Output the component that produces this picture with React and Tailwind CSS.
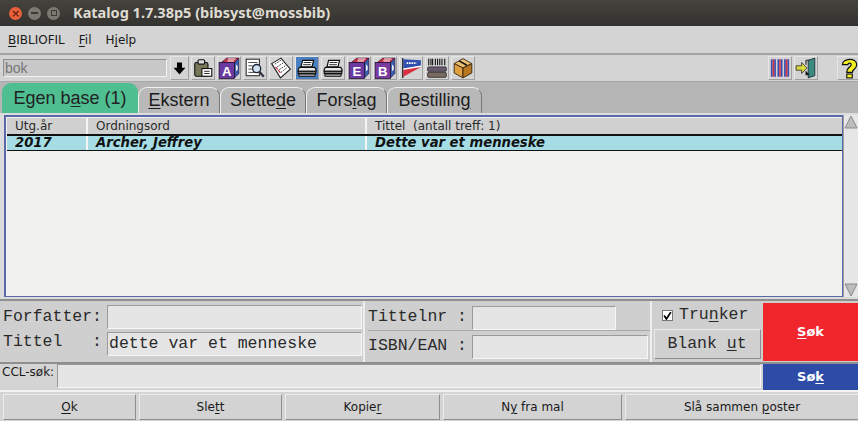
import React from "react";

const ToolBtn = ({ children, active, cls = "", w = "w-[24px]", size = 22 }) => (
  <div className={`${w} h-[24px] flex items-center justify-center shrink-0 border border-t-[#e6e6e6] border-l-[#e6e6e6] border-r-[#a0a0a0] border-b-[#a0a0a0] ${active ? "bg-[#4a7fc0]" : "bg-[#d4d4d4]"} ${cls}`}>
    <svg width={size} height={size} viewBox="0 0 20 20" className="shrink-0">{children}</svg>
  </div>
);

const Cube = ({ letter, c }) => (
  <>
    <path d="M3 5 L8 1 H19 L15 5 Z" fill="#c8324a" stroke="#301030" strokeWidth=".6" />
    <path d="M15 5 L19 1 V15 L15 19 Z" fill="#3a5fb0" stroke="#301030" strokeWidth=".6" />
    <path d="M16.3 6.5 l1.6 2 v3 l-1.6 1.5z" fill="#f0f0f0" />
    <rect x="1" y="5" width="14" height="14.5" fill={c} stroke="#201030" strokeWidth=".7" />
    <text x="8" y="17.5" textAnchor="middle" fontSize="12" fontWeight="700" fill="#fff" fontFamily="Liberation Sans">{letter}</text>
    <path d="M9 1.8h7M8.5 3.6h6" stroke="#fff" strokeWidth="1" />
  </>
);

const Printer = () => (
  <>
    <path d="M6 3 H16 L14.5 9 H4.5 Z" fill="#fff" stroke="#111" strokeWidth="1.1" />
    <path d="M7 5h7M6.5 7h7" stroke="#111" strokeWidth=".8" />
    <path d="M3 9.5 H17 Q19 12 18 13 H2 Q1.5 11 3 9.5Z" fill="#e8e8e8" stroke="#111" strokeWidth="1.1" />
    <rect x="2" y="13" width="16" height="2" fill="#8a8a8a" stroke="#111" strokeWidth="1" />
    <rect x="2.5" y="15.5" width="15" height="2" rx="1" fill="#bbb" stroke="#111" strokeWidth="1" />
  </>
);

const U = ({ children }) => <span className="underline underline-offset-2">{children}</span>;

const Btn = ({ w, children }) => (
  <div className={`${w} h-[26px] flex items-center justify-center shrink-0 bg-[#d3d3d3] border border-t-[#ececec] border-l-[#ececec] border-r-[#8e8e8e] border-b-[#8e8e8e] text-[12px] text-[#1a1a1a]`}>{children}</div>
);

const Field = ({ w, children }) => (
  <div className={`${w} h-[24px] bg-[#e5e5e5] border border-t-[#9a9a9a] border-l-[#9a9a9a] border-r-[#f7f7f7] border-b-[#f7f7f7] flex items-center px-[1px] text-[16.5px] leading-none`}>{children}</div>
);

const Tab = ({ w, children, active }) => (
  <div className={`${w} shrink-0 flex items-center justify-center rounded-t-[9px] border-t border-l border-r text-[18px] ${active ? "h-[30px] bg-[#4fbf92] border-[#4fbf92] text-[#222] ml-[2px]" : "h-[26px] mt-[4px] bg-[#b9b9b9] border-t-[#f0f0f0] border-l-[#f0f0f0] border-r-[#777] text-[#1c1c1c]"}`}>{children}</div>
);

export default function App() {
  return (
    <div className="w-[858px] h-[421px] overflow-hidden flex flex-col bg-[#d4d4d4] font-['DejaVu_Sans',sans-serif] text-[#1a1a1a]">
      {/* Title bar */}
      <div className="h-[26px] shrink-0 flex items-center bg-gradient-to-b from-[#45433e] to-[#33322e] pl-[9px]">
        <div className="w-[13px] h-[13px] rounded-full bg-[#e9603a] flex items-center justify-center text-[11px] leading-none font-bold text-[#6b2410]">×</div>
        <div className="w-[13px] h-[13px] rounded-full bg-[#7a7972] ml-[6px] flex items-center justify-center"><div className="w-[7px] h-[2px] bg-[#3a3934]"></div></div>
        <div className="w-[13px] h-[13px] rounded-full bg-[#7a7972] ml-[6px] flex items-center justify-center"><div className="w-[6px] h-[6px] border border-[#3a3934]"></div></div>
        <div className="ml-[13px] text-[14.5px] font-bold text-[#dfdbd2] font-['Noto_Sans',sans-serif] whitespace-nowrap">Katalog 1.7.38p5 (bibsyst@mossbib)</div>
      </div>
      {/* Menu */}
      <div className="h-[29px] shrink-0 flex items-center gap-[14px] pl-[8px] pt-[1px] text-[12px] border-b-2 border-[#a2a2a2]">
        <span><U>B</U>IBLIOFIL</span>
        <span><U>F</U>il</span>
        <span>H<U>j</U>elp</span>
      </div>
      {/* Toolbar */}
      <div className="h-[27px] shrink-0 flex items-center pl-[3px] border-b border-[#a8a8a8]">
        <div className="w-[164px] h-[18px] mr-[3px] bg-[#c8c8c8] border border-t-[#909090] border-l-[#909090] border-r-[#f2f2f2] border-b-[#f2f2f2] flex items-center text-[14px] text-[#777] pl-[1px] font-['Liberation_Sans',sans-serif]">bok</div>
        <div className="flex gap-[2px]">
          <ToolBtn w="w-[19px]" size={17}><path d="M7 3h6v6h4l-7 8-7-8h4z" fill="#000" /></ToolBtn>
          <ToolBtn>
            <rect x="2.5" y="5" width="12" height="12.5" rx="1.5" fill="#77775a" stroke="#111" />
            <rect x="5.5" y="2.5" width="6" height="4" rx="1" fill="#ddd" stroke="#111" />
            <rect x="9" y="10.5" width="9" height="7" fill="#fff" stroke="#111" />
            <path d="M11 13h5M11 15h5" stroke="#111" strokeWidth=".8" />
          </ToolBtn>
          <ToolBtn><Cube letter="A" c="#6a3aa0" /></ToolBtn>
          <ToolBtn>
            <rect x="2" y="2" width="12" height="15" fill="#fff" stroke="#333" />
            <path d="M4 5h8M4 8h4M4 11h4M4 14h5" stroke="#333" strokeWidth=".8" />
            <circle cx="11.5" cy="10.5" r="3.7" fill="#cfe0f0" stroke="#223" strokeWidth="1.2" />
            <path d="M14 13.5 18 18" stroke="#334" strokeWidth="2" />
          </ToolBtn>
          <ToolBtn>
            <path d="M1.5 6 10 1 18.5 11 9.5 19Z" fill="#fff" stroke="#222" />
            <path d="M4.5 6.5l6-4M6.5 9l6-4M8.5 11.5l6-4M10 14l5-4" stroke="#333" strokeWidth=".9" strokeDasharray="1.5 1" />
            <path d="M5 9l2 2.500M7.500 12l2 2.500" stroke="#c03040" strokeWidth="1" />
          </ToolBtn>
          <ToolBtn active><Printer /></ToolBtn>
          <ToolBtn><Printer /></ToolBtn>
          <ToolBtn><Cube letter="E" c="#6a3aa0" /></ToolBtn>
          <ToolBtn><Cube letter="B" c="#7a3aa0" /></ToolBtn>
          <ToolBtn>
            <path d="M2.500 1V19" stroke="#222" strokeWidth="1.2" />
            <path d="M3 2 19 3 19 8 3 11Z" fill="#3050b0" />
            <path d="M3 11.500 19 9 3 18Z" fill="#d83040" />
            <path d="M3 11 19 8.300" stroke="#fff" strokeWidth="1.2" />
            <path d="M6 5.500h9" stroke="#fff" strokeWidth="1.500" strokeDasharray="1.500 .7" />
          </ToolBtn>
          <ToolBtn>
            <path d="M2.500 1.500v6M4.500 1.500v6M6 1.500v6M8.500 1.500v6M10.500 1.500v6M12.500 1.500v6M14.500 1.500v6M17 1.500v6" stroke="#111" strokeWidth="1" />
            <rect x="1.500" y="9" width="17" height="4" rx="1" fill="#6a5a70" stroke="#222" strokeWidth=".7" />
            <rect x="1.500" y="14" width="17" height="4.500" rx="1" fill="#7a6a60" stroke="#222" strokeWidth=".7" />
          </ToolBtn>
          <ToolBtn>
            <path d="M2 6 10 1.500 18 6 10 10Z" fill="#edc070" stroke="#321" strokeWidth=".8" />
            <path d="M2 6 10 10V19L2 14.500Z" fill="#e0a040" stroke="#321" strokeWidth=".8" />
            <path d="M18 6 10 10V19L18 14.500Z" fill="#b87820" stroke="#321" strokeWidth=".8" />
            <path d="M6.500 3.500 13.500 7.500" stroke="#111" strokeWidth="1.400" />
          </ToolBtn>
        </div>
        <div className="flex-1"></div>
        <ToolBtn>
          <path d="M2.500 2v16M5.500 2v16M8.500 2v16M11.500 2v16M14.500 2v16M17.500 2v16" stroke="#3a50b0" strokeWidth="1.600" />
          <path d="M4 2v16M10 2v16M16 2v16" stroke="#d03848" strokeWidth="1.400" />
        </ToolBtn>
        <ToolBtn cls="ml-[2px]">
          <path d="M12 3 18 1V17L12 19Z" fill="#3a8a80" stroke="#123" strokeWidth=".7" />
          <path d="M10 3H13M10 3v4M10 13v3H13" stroke="#222" />
          <path d="M1 8h5V5l5 5-5 5v-3H1z" fill="#d8d840" stroke="#222" strokeWidth=".7" />
        </ToolBtn>
        <ToolBtn cls="ml-[19px] mr-[-3px]">
          <path d="M4 7C4 1 17 0 17 7c0 4-4 4-4 7H8c0-5 4-5 4-7 0-2-3-2-3 0z" fill="#f5f020" stroke="#111" strokeWidth="1.100" />
          <rect x="8" y="15.500" width="5" height="3.500" fill="#f5f020" stroke="#111" />
        </ToolBtn>
      </div>
      {/* Tabs */}
      <div className="h-[31px] shrink-0 flex items-end bg-[#b5b5b5] font-['Liberation_Sans',sans-serif]">
        <Tab w="w-[136px]" active>Egen b<U>a</U>se (1)</Tab>
        <Tab w="w-[82px]"><U>E</U>kstern</Tab>
        <Tab w="w-[86px]">Slette<U>d</U>e</Tab>
        <Tab w="w-[81px]">Fors<U>l</U>ag</Tab>
        <Tab w="w-[95px]">Bestillin<U>g</U></Tab>
      </div>
      {/* Table */}
      <div className="h-[188px] shrink-0 flex pl-[4px] pt-[2px] bg-[#dcdcdc] border-b-2 border-[#8f8f8f]">
        <div className="flex-1 h-[182px] flex flex-col bg-[#f1f1ef] border border-[#5a68a8] border-l-2 border-t-2 pl-[1px] pt-[1px] overflow-hidden">
          <div className="h-[16px] shrink-0 flex bg-[#d0d0d0] text-[12px] leading-[16px] text-[#2a2a2a]">
            <div className="w-[81px] pl-[8px] border-r-2 border-[#f4f4f4]">Utg.år</div>
            <div className="w-[279px] pl-[8px] border-r-2 border-[#f4f4f4]">Ordningsord</div>
            <div className="flex-1 pl-[8px]">Tittel&nbsp; (antall treff: 1)</div>
          </div>
          <div className="h-[17px] shrink-0 flex bg-[#a6dde5] border-t-2 border-b border-[#111] text-[13.2px] leading-[14px] font-bold italic text-[#111]">
            <div className="w-[81px] pl-[8px] border-r-2 border-[#f4f4f4]">2017</div>
            <div className="w-[279px] pl-[8px] border-r-2 border-[#f4f4f4]">Archer, Jeffrey</div>
            <div className="flex-1 pl-[8px]">Dette var et menneske</div>
          </div>
        </div>
        <div className="w-[15px] h-[182px] shrink-0 flex flex-col justify-between bg-[#e6e6e6] border-l border-[#a0a0a0]">
          <svg width="14" height="14" viewBox="0 0 14 14"><path d="M7 1 13 13H1Z" fill="#bdbdbd" stroke="#8a8a8a" /></svg>
          <svg width="14" height="14" viewBox="0 0 14 14"><path d="M7 13 13 1H1Z" fill="#bdbdbd" stroke="#8a8a8a" /></svg>
        </div>
      </div>
      {/* Form */}
      <div className="h-[63px] shrink-0 flex bg-[#cfcfcf] font-['Liberation_Mono',monospace] text-[#2a2a2a] border-b-2 border-[#8f8f8f]">
        <div className="w-[363px] shrink-0 flex flex-col gap-[3px] pt-[4px] pl-[3px]">
          <div className="flex items-center h-[24px]">
            <span className="w-[104px] text-[16.5px] whitespace-pre">Forfatter:</span>
            <Field w="w-[255px]"></Field>
          </div>
          <div className="flex items-center h-[24px]">
            <span className="w-[104px] text-[16.5px] whitespace-pre -mt-[3px]">Tittel   :</span>
            <Field w="w-[255px]">dette var et menneske</Field>
          </div>
        </div>
        <div className="w-[287px] shrink-0 flex flex-col pl-[3px] border-l-2 border-[#eeeeee]">
          <div className="flex items-center h-[30px] pt-[4px] border-b border-[#a8a8a8]">
            <span className="w-[104px] text-[16.5px] whitespace-pre">Tittelnr :</span>
            <Field w="w-[144px]"></Field>
          </div>
          <div className="flex items-center h-[28px] pt-[3px]">
            <span className="w-[104px] text-[16.5px] whitespace-pre">ISBN/EAN :</span>
            <Field w="w-[176px]"></Field>
          </div>
        </div>
        <div className="w-[112px] shrink-0 flex flex-col items-center border-l-2 border-[#eeeeee]">
          <div className="h-[28px] w-full flex items-center gap-[6px] text-[16.5px] pl-[10px] pt-[1px]">
            <div className="w-[11px] h-[11px] bg-white border border-[#777] flex items-center justify-center">
              <svg width="9" height="9" viewBox="0 0 8 8"><path d="M1 4l2 3 4-6" fill="none" stroke="#000" strokeWidth="1.600" /></svg>
            </div>
            <span>Tru<U>n</U>ker</span>
          </div>
          <div className="w-[107px] h-[30px] flex items-center justify-center text-[16.5px] bg-[#d0d0d0] border border-t-[#ececec] border-l-[#ececec] border-r-[#8e8e8e] border-b-[#8e8e8e]"><span>Blank&nbsp;<U>u</U>t</span></div>
        </div>
        <div className="flex-1 ml-[1px] h-[58px] mt-[2px] bg-[#f0262c] flex items-center justify-center text-white text-[13px] font-bold font-['DejaVu_Sans',sans-serif]"><span><U>S</U>øk</span></div>
      </div>
      {/* CCL */}
      <div className="h-[28px] shrink-0 flex bg-[#d4d4d4] border-b-2 border-[#f2f2f2]">
        <div className="w-[57px] shrink-0 pl-[2px] text-[12px] leading-[16px]">CCL-søk:</div>
        <div className="w-[704px] h-[24px] shrink-0 bg-[#e5e5e5] border border-t-[#9a9a9a] border-l-[#9a9a9a] border-r-[#f7f7f7] border-b-[#f7f7f7]"></div>
        <div className="flex-1 ml-[2px] h-[26px] bg-[#2f4ba8] flex items-center justify-center text-white text-[13px] font-bold"><span>Sø<U>k</U></span></div>
      </div>
      {/* Bottom buttons */}
      <div className="flex-1 flex items-center gap-[3px] pl-[3px] bg-[#d4d4d4]">
        <Btn w="w-[133px]"><span><U>O</U>k</span></Btn>
        <Btn w="w-[143px]"><span>Sle<U>t</U>t</span></Btn>
        <Btn w="w-[155px]"><span>Kopie<U>r</U></span></Btn>
        <Btn w="w-[179px]"><span>N<U>y</U> fra mal</span></Btn>
        <Btn w="w-[234px]"><span>Slå sammen <U>p</U>oster</span></Btn>
      </div>
    </div>
  );
}
